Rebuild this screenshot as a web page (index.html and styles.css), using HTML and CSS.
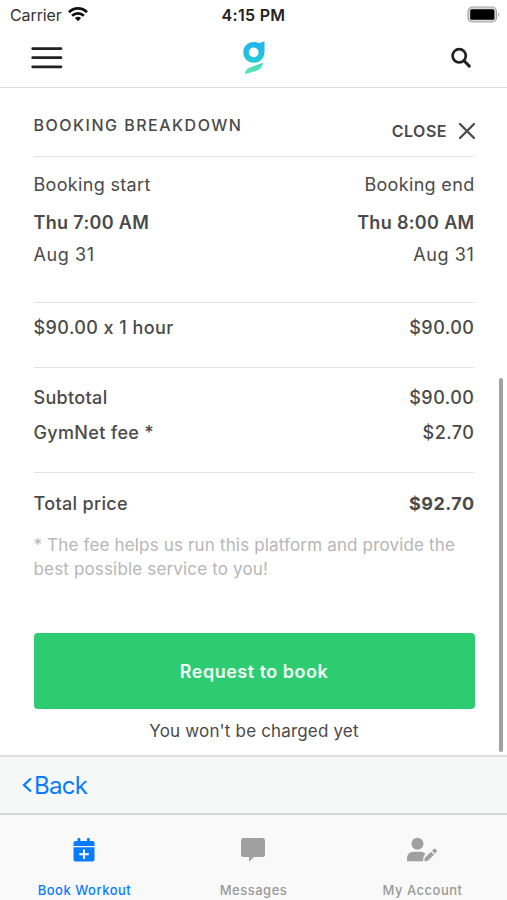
FILE: index.html
```html
<!DOCTYPE html>
<html lang="en">
<head>
<meta charset="utf-8">
<meta name="viewport" content="width=device-width, initial-scale=1">
<title>Book Workout</title>
<link rel="stylesheet" href="styles.css">
</head>
<body>
<div class="screen">
  <div class="status">
    <div class="carrier"><span>Carrier</span>
      <svg class="wifi" width="20" height="15" viewBox="0 0 20 15"><g fill="none" stroke="#111" stroke-width="2.7"><path d="M1 5.2C6.2.2 13.8.2 19 5.2"/><path d="M4.1 8.7C7.5 5.5 12.5 5.5 15.9 8.7"/></g><path d="M6.9 11.1Q10 8.6 13.1 11.1L10 14.2Z" fill="#111"/></svg>
    </div>
    <div class="clock">4:15 PM</div>
    <svg class="battery" width="34" height="18" viewBox="0 0 34 18"><rect x="1" y="1" width="28.5" height="15" rx="4.5" fill="#d8d8d8" stroke="#a2a2a2" stroke-width="1.2"/><rect x="3.2" y="3.2" width="24.2" height="10.6" rx="1.5" fill="#000"/><path d="M31.3 6.2q2 2.3 0 4.6z" fill="#a2a2a2"/></svg>
  </div>
  <header class="nav">
    <svg class="menu" width="32" height="24" viewBox="0 0 32 24"><path d="M1.700 2.600h28.300M1.700 11.700h28.300M1.700 20.800h28.300" stroke="#222" stroke-width="2.800" stroke-linecap="round"/></svg>
    <svg class="logo" width="24" height="36" viewBox="0 0 24 36"><defs><linearGradient id="g" x1="0" y1="0" x2="0" y2="1"><stop offset="0" stop-color="#20b2f0"/><stop offset="1" stop-color="#25cbd8"/></linearGradient><linearGradient id="h" x1="0" y1="1" x2="1" y2="0"><stop offset="0" stop-color="#62e9a8"/><stop offset="1" stop-color="#40d9c9"/></linearGradient></defs><path fill="url(#g)" fill-rule="evenodd" d="M17 3.300L22.500 1.200V11.500C22.500 19 17.800 22.800 11.700 22.800C5.600 22.800 1.300 18.500 1.300 12.300C1.300 6.200 5.800 1.900 11.700 1.900C13.700 1.900 15.500 2.300 17 3.300ZM11.700 7.500A4.900 4.900 0 1 0 11.700 17.300A4.900 4.900 0 1 0 11.700 7.500Z"/><path fill="url(#h)" d="M20.900 22.800C20.400 27.500 18 29.600 14 30.900L3 34.200C3 30.800 4.500 28.600 8 27.500Z"/></svg>
    <svg class="search" width="22" height="22" viewBox="0 0 22 22"><circle cx="9.200" cy="8.800" r="6.600" fill="none" stroke="#222" stroke-width="2.700"/><path d="M14 13.700L19.300 19.100" stroke="#222" stroke-width="3" stroke-linecap="round"/></svg>
  </header>
  <main class="content">
    <div class="heading">
      <h1>BOOKING BREAKDOWN</h1>
      <div class="close"><span>CLOSE</span><svg width="18" height="18" viewBox="0 0 18 18"><path d="M2 2L16 16M16 2L2 16" stroke="#4a4a4a" stroke-width="2.300" stroke-linecap="round"/></svg></div>
    </div>
    <section class="period">
      <div class="row label"><span>Booking start</span><span>Booking end</span></div>
      <div class="row time"><span>Thu 7:00 AM</span><span>Thu 8:00 AM</span></div>
      <div class="row date"><span>Aug 31</span><span>Aug 31</span></div>
    </section>
    <section class="rate">
      <div class="row item"><span class="hours">$90.00 x 1 hour</span><span class="amount">$90.00</span></div>
    </section>
    <section class="fees">
      <div class="row item"><span>Subtotal</span><span class="amount">$90.00</span></div>
      <div class="row item"><span>GymNet fee *</span><span class="amount">$2.70</span></div>
    </section>
    <section class="total">
      <div class="row item"><span>Total price</span><b class="amount">$92.70</b></div>
      <p class="note">* The fee helps us run this platform and provide the<br>best possible service to you!</p>
    </section>
    <div class="button">Request to book</div>
    <p class="caption">You won't be charged yet</p>
    <div class="scroll"></div>
  </main>
  <div class="back"><svg width="12" height="18" viewBox="0 0 12 18"><path d="M10 2.500L3 9L10 15.500" fill="none" stroke="#087cff" stroke-width="2.300"/></svg><span>Back</span></div>
  <nav class="tabs">
    <div class="tab active">
      <svg width="24" height="26" viewBox="0 0 24 26"><path fill="#087cff" d="M1.500 9V6Q1.500 4 3.500 4H5.500V1.700Q5.500 1 6.300 1H7.500Q8.300 1 8.300 1.700V4H15V1.700Q15 1 15.800 1H17Q17.800 1 17.800 1.700V4H20.500Q22.500 4 22.500 6V9Z"/><path fill="#087cff" d="M1.500 10.300H22.500V22.700Q22.500 24.500 20.500 24.500H3.500Q1.500 24.500 1.500 22.700Z"/><path d="M12 12.500V22M7.200 17.200H16.800" stroke="#fff" stroke-width="2"/></svg>
      <span>Book Workout</span>
    </div>
    <div class="tab">
      <svg width="26" height="26" viewBox="0 0 26 26"><path fill="#a0a0a0" d="M3.500 1H22.500Q25 1 25 3.500V17.500Q25 20 22.500 20H14L9 24.500V20H3.500Q1 20 1 17.500V3.500Q1 1 3.500 1Z"/></svg>
      <span>Messages</span>
    </div>
    <div class="tab">
      <svg width="32" height="26" viewBox="0 0 32 26"><g fill="#a0a0a0"><circle cx="11.500" cy="6.800" r="6"/><path d="M1 24.300V21.500Q1 15 8 14.700H15Q17.500 14.700 19.500 16.700L17.600 19.500L17 24.300Z"/><path d="M18.300 24.500L18.800 20.700L25 14.700L28 17.700L22 23.700Z"/><path d="M25.900 13.800L28 11.900Q28.800 11.300 29.600 12L30.700 13.200Q31.300 14 30.600 14.800L28.800 16.700Z"/></g></svg>
      <span>My Account</span>
    </div>
  </nav>
</div>
</body>
</html>
```
FILE: styles.css
```css
* { box-sizing: border-box; }
body { margin: 0; background: #fff; font-family: Inter, "Liberation Sans", sans-serif; font-feature-settings: "calt" 0; color: #4a4a4a; }
h1, p { margin: 0; }
svg { display: block; flex: none; }
.screen { width: 507px; height: 900px; overflow: hidden; display: flex; flex-direction: column; }
.status { height: 30px; flex: none; display: grid; grid-template-columns: 1fr auto 1fr; align-items: center; padding: 0 6px 0 10px; font-size: 16px; color: #222; }
.carrier { display: flex; gap: 6px; align-items: center; color: #333; letter-spacing: -0.1px; }
.wifi { margin-top: -2px; }
.clock { font-weight: 600; letter-spacing: 0.3px; margin-left: -4px; }
.battery { justify-self: end; margin-top: -1px; }
.nav { height: 58px; flex: none; border-bottom: 1.5px solid #dcdcdc; display: grid; grid-template-columns: 1fr auto 1fr; align-items: center; padding: 0 35px 2px 31px; }
.logo { margin-left: 5px; }
.search { justify-self: end; }
.content { height: 667px; flex: none; padding: 0 32.5px 0 33.5px; position: relative; font-size: 18px; letter-spacing: 0.33px; }
.heading { height: 69px; display: flex; justify-content: space-between; border-bottom: 1px solid #e2e2e2; }
h1 { font-size: 16px; font-weight: 500; letter-spacing: 1.5px; line-height: 20px; margin-top: 27px; }
.close { display: flex; align-items: center; gap: 10.5px; height: 20px; margin: 33px -1px 0 0; font-size: 16px; font-weight: 600; letter-spacing: 0.5px; }
.row { display: flex; justify-content: space-between; line-height: 24px; }
.period { height: 146px; padding-top: 16px; border-bottom: 1px solid #e2e2e2; }
.time { margin-top: 14px; font-weight: 600; }
.date { margin-top: 8px; letter-spacing: 0.6px; }
.rate { height: 65px; padding-top: 13px; border-bottom: 1px solid #e2e2e2; }
.item { font-weight: 500; }
.item b { font-weight: 700; }
.hours { letter-spacing: 0.43px; }
.amount { letter-spacing: 0.5px; }
.item b.amount { letter-spacing: 0.45px; }
.fees { height: 105px; padding-top: 18px; border-bottom: 1px solid #e2e2e2; display: flex; flex-direction: column; gap: 11px; }
.total { height: 160px; padding-top: 19px; }
.note { margin-top: 17px; font-size: 17px; line-height: 24px; letter-spacing: 0.16px; color: #b6b6b6; white-space: nowrap; }
.button { height: 76px; display: flex; align-items: center; justify-content: center; background: #2ecc71; color: #f2fff7; border-radius: 4px; font-weight: 600; letter-spacing: 0.5px; }
.caption { margin-top: 10px; font-size: 17px; line-height: 24px; letter-spacing: 0.17px; text-align: center; }
.scroll { position: absolute; right: 4px; top: 290px; width: 4px; height: 374px; border-radius: 2px; background: #a1a1a1; }
.back { height: 60px; flex: none; border-top: 2px solid #dedede; border-bottom: 2px solid #d7d7d7; background: #f6f8f7; display: flex; align-items: center; padding-left: 21px; gap: 1px; color: #087cff; font-size: 24px; letter-spacing: -0.7px; }
.tabs { flex: 1; background: #f9f9f9; display: grid; grid-template-columns: repeat(3, 1fr); }
.tab { display: flex; flex-direction: column; align-items: center; padding-top: 22px; color: #999; font-size: 13px; font-weight: 500; letter-spacing: 0.5px; }
.tab svg { margin-left: -1.5px; }
.tab span { line-height: 16px; margin-top: 19px; }
.active { color: #087cff; }
```
